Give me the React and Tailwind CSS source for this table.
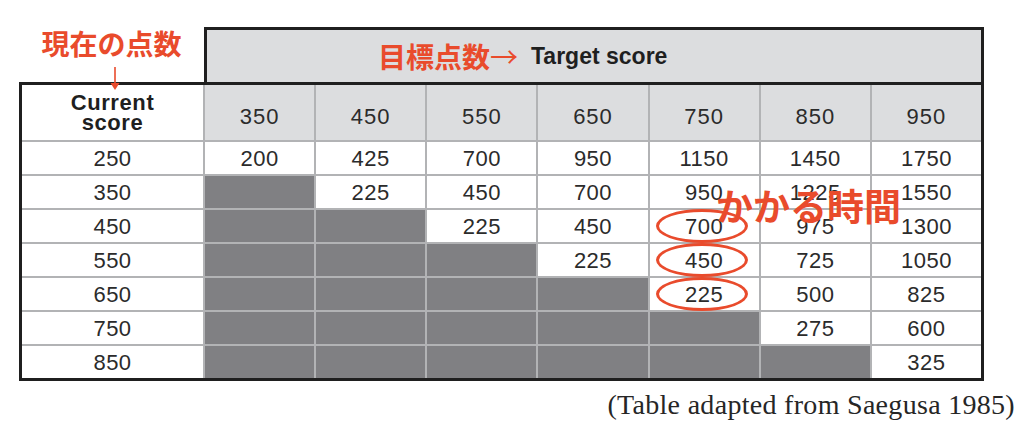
import React from 'react';

const targets = [350, 450, 550, 650, 750, 850, 950];

// null = shaded cell (already past target)
const rows = [
  { score: 250, values: [200, 425, 700, 950, 1150, 1450, 1750] },
  { score: 350, values: [null, 225, 450, 700, 950, 1225, 1550] },
  { score: 450, values: [null, null, 225, 450, 700, 975, 1300] },
  { score: 550, values: [null, null, null, 225, 450, 725, 1050] },
  { score: 650, values: [null, null, null, null, 225, 500, 825] },
  { score: 750, values: [null, null, null, null, null, 275, 600] },
  { score: 850, values: [null, null, null, null, null, null, 325] },
];

// cells that get the red ring: [row, col]
const circled = ['2-4', '3-4', '4-4'];

const jp = "font-['Noto_Sans_CJK_JP',sans-serif]";

const App = () => {
  return (
    <div className="w-[1024px] h-[431px] bg-white overflow-hidden font-['Liberation_Sans',Arial,sans-serif] text-[#2b2b2b]">
      <div className="ml-[19px] w-[965px]">
        <div className="flex h-[82px]">
          <div className="w-[185px] relative">
            <div className={`pt-[25px] text-center text-[28px] leading-[36px] font-bold text-[#e94b2c] ${jp}`}>
              現在の点数
            </div>
            <svg className="absolute left-[90px] top-[67px] z-10" width="12" height="24" viewBox="0 0 12 24">
              <line x1="6" y1="0" x2="6" y2="18" stroke="#e94b2c" strokeWidth="1.6" />
              <path d="M1.5 16 L10.5 16 L6 23 Z" fill="#e94b2c" />
            </svg>
          </div>
          <div className="flex-1 mt-[27px] border-t-[3px] border-x-[3px] border-[#1f1f1f] bg-[#dcdddf] flex items-center pl-[171px]">
            <span className={`text-[28px] leading-[36px] font-bold text-[#e94b2c] ${jp}`}>目標点数</span>
            <span className={`text-[28px] leading-[36px] font-normal text-[#e94b2c] ${jp}`}>→</span>
            <span className="ml-[13px] text-[23px] font-bold text-[#1f1f1f]">Target score</span>
          </div>
        </div>

        <div className="relative border-[3px] border-[#1f1f1f] bg-[#b2b3b5] grid grid-cols-[181px_repeat(7,1fr)] gap-[2px]">
          <div className="h-[55px] bg-white flex flex-col items-center justify-center text-[22px] leading-[20px] font-bold tracking-[0.6px] text-[#1f1f1f]">
            <span>Current</span>
            <span>score</span>
          </div>
          {targets.map((t) => (
            <div key={t} className="h-[55px] bg-[#dcdddf] flex items-center justify-center pt-[7px] text-[22px] tracking-[1px]">
              {t}
            </div>
          ))}

          {rows.map((row, r) => (
            <React.Fragment key={row.score}>
              <div className="h-[32px] bg-white flex items-center justify-center text-[22px] tracking-[0.5px]">{row.score}</div>
              {row.values.map((v, c) =>
                v === null ? (
                  <div key={c} className="h-[32px] bg-[#808083]" />
                ) : (
                  <div key={c} className="relative h-[32px] bg-white flex items-center justify-center text-[22px] tracking-[0.5px]">
                    {v}
                    {circled.includes(`${r}-${c}`) && (
                      <span className="absolute left-[6px] w-[92px] top-[-1px] bottom-[-1px] rounded-[50%] border-[3px] border-[#e94b2c]" />
                    )}
                  </div>
                )
              )}
            </React.Fragment>
          ))}

          <div className={`absolute left-[694px] top-[102px] text-[37px] leading-[37px] font-bold text-[#e94b2c] whitespace-nowrap ${jp}`}>
            かかる時間
          </div>
        </div>
      </div>

      <div className="mt-[8px] pr-[9px] text-right font-['Liberation_Serif',serif] text-[28px] leading-[32px] tracking-[0.3px] text-[#262626]">
        (Table adapted from Saegusa 1985)
      </div>
    </div>
  );
};

export default App;
